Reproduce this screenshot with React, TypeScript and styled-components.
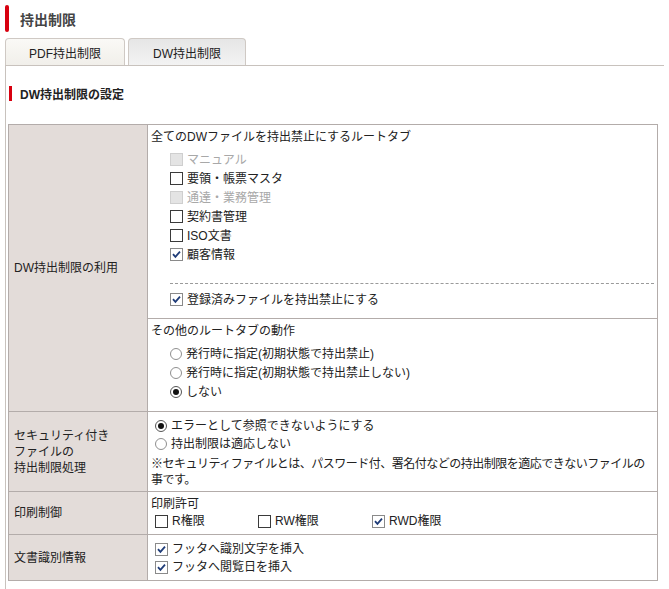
import React from 'react'
import styled, { createGlobalStyle } from 'styled-components'

const GlobalStyle = createGlobalStyle`
  body {
    margin: 0;
    background: #fff;
    font-family: "Liberation Sans", "Noto Sans CJK JP", sans-serif;
    font-size: 12px;
    color: #222;
  }
`

function App() {
  return (
    <>
      <GlobalStyle />
      <StyledPage>
        <TitleBar>持出制限</TitleBar>

        <Tabs>
          <Tab $width={120} $tone="beige">PDF持出制限</Tab>
          <Tab $width={118} $tone="gray">DW持出制限</Tab>
        </Tabs>

        <Panel>
          <SectionTitle>DW持出制限の設定</SectionTitle>

          <SettingsTable>
            <tbody>
              <tr>
                <LabelCell rowSpan={2}>DW持出制限の利用</LabelCell>
                <ValueCell $pad="4px 3px 9px">
                  <Heading>全てのDWファイルを持出禁止にするルートタブ</Heading>
                  <Indented>
                    <Check disabled>マニュアル</Check>
                    <Check>要領・帳票マスタ</Check>
                    <Check disabled>通達・業務管理</Check>
                    <Check>契約書管理</Check>
                    <Check>ISO文書</Check>
                    <Check checked>顧客情報</Check>
                    <Dashed />
                    <Check checked>登録済みファイルを持出禁止にする</Check>
                  </Indented>
                </ValueCell>
              </tr>
              <tr>
                <ValueCell $pad="4px 3px 10px">
                  <Heading>その他のルートタブの動作</Heading>
                  <Indented>
                    <Radio>発行時に指定(初期状態で持出禁止)</Radio>
                    <Radio>発行時に指定(初期状態で持出禁止しない)</Radio>
                    <Radio checked>しない</Radio>
                  </Indented>
                </ValueCell>
              </tr>
              <tr>
                <LabelCell>
                  セキュリティ付き
                  <br />
                  ファイルの
                  <br />
                  持出制限処理
                </LabelCell>
                <ValueCell $pad="5px 3px 3px">
                  <Radio checked dense>エラーとして参照できないようにする</Radio>
                  <Radio dense>持出制限は適応しない</Radio>
                  <Note>
                    ※セキュリティファイルとは、パスワード付、署名付などの持出制限を適応できないファイルの事です。
                  </Note>
                </ValueCell>
              </tr>
              <tr>
                <LabelCell>印刷制御</LabelCell>
                <ValueCell $pad="4px 3px 4px">
                  <Heading>印刷許可</Heading>
                  <PrintRow>
                    <Check dense>R権限</Check>
                    <Check dense>RW権限</Check>
                    <Check checked dense>RWD権限</Check>
                  </PrintRow>
                </ValueCell>
              </tr>
              <tr>
                <LabelCell>文書識別情報</LabelCell>
                <ValueCell $pad="5px 3px 4px">
                  <Check checked dense>フッタへ識別文字を挿入</Check>
                  <Check checked dense>フッタへ閲覧日を挿入</Check>
                </ValueCell>
              </tr>
            </tbody>
          </SettingsTable>
        </Panel>
      </StyledPage>
    </>
  )
}

export default App

type OptionProps = {
  checked?: boolean
  disabled?: boolean
  dense?: boolean
  children: React.ReactNode
}

function Check({ checked, disabled, dense, children }: OptionProps) {
  return (
    <Option $disabled={disabled} $dense={dense}>
      <Box $checked={checked} $disabled={disabled}>
        {checked && (
          <svg width="9" height="9" viewBox="0 0 9 9">
            <path d="M1 4.2 L3.4 6.8 L8 1.6" fill="none" stroke="#1f3c78" strokeWidth="1.8" />
          </svg>
        )}
      </Box>
      {children}
    </Option>
  )
}

function Radio({ checked, dense, children }: OptionProps) {
  return (
    <Option $dense={dense}>
      <Circle $checked={checked} />
      {children}
    </Option>
  )
}

const StyledPage = styled.div`
  padding: 5px 5px 0 5px;
  width: 659px;
`

const TitleBar = styled.h1`
  display: flex;
  align-items: center;
  gap: 11px;
  height: 27px;
  margin: 0;
  font-size: 14px;
  font-weight: bold;
  color: #444;

  &::before {
    content: '';
    width: 4px;
    height: 27px;
    border-radius: 2px;
    background: #d8000f;
  }
`

const Tabs = styled.div`
  display: flex;
  gap: 3px;
  margin-top: 6px;
`

const Tab = styled.div<{ $width: number; $tone: 'beige' | 'gray' }>`
  width: ${(p) => p.$width}px;
  height: 27px;
  display: flex;
  align-items: center;
  justify-content: center;
  box-sizing: border-box;
  border: 1px solid #cfc9c4;
  border-bottom: none;
  border-radius: 4px 4px 0 0;
  color: #222;
  background: ${(p) =>
    p.$tone === 'beige'
      ? 'linear-gradient(#faf9f6, #f1efea)'
      : 'linear-gradient(#e6e6e6, #f3f3f3)'};
`

const Panel = styled.div`
  border-top: 1px solid #c8c2bd;
  border-left: 1px solid #c8c2bd;
  padding: 20px 7px 8px 2px;
`

const SectionTitle = styled.h2`
  display: flex;
  align-items: center;
  gap: 8px;
  margin: 0 0 23px 1px;
  height: 15px;
  font-size: 12px;
  font-weight: bold;
  color: #222;

  &::before {
    content: '';
    width: 3px;
    height: 15px;
    background: #d8000f;
  }
`

const SettingsTable = styled.table`
  width: 650px;
  border-collapse: collapse;
  border: 1px solid #b3acaa;

  td {
    border: 1px solid #b3acaa;
  }
`

const LabelCell = styled.td`
  width: 133px;
  padding: 0 0 0 5px;
  background: #e3dcd9;
  line-height: 16px;
  vertical-align: middle;
`

const ValueCell = styled.td<{ $pad: string }>`
  padding: ${(p) => p.$pad};
  vertical-align: top;
  line-height: 16px;
`

const Heading = styled.div`
  line-height: 16px;
`

const Indented = styled.div`
  margin-top: 5px;
  padding-left: 15px;
`

const Option = styled.label<{ $disabled?: boolean; $dense?: boolean }>`
  display: flex;
  align-items: center;
  gap: 4px;
  height: ${(p) => (p.$dense ? 18 : 19)}px;
  padding-left: 4px;
  color: ${(p) => (p.$disabled ? '#a8a8a8' : '#222')};
`

const Box = styled.span<{ $checked?: boolean; $disabled?: boolean }>`
  width: 13px;
  height: 13px;
  box-sizing: border-box;
  display: flex;
  align-items: center;
  justify-content: center;
  border: 1px solid
    ${(p) => (p.$disabled ? '#cfcfcf' : p.$checked ? '#8a8a8a' : '#3a3a3a')};
  background: ${(p) => (p.$disabled ? '#e4e4e4' : '#fff')};
`

const Circle = styled.span<{ $checked?: boolean }>`
  width: 12px;
  height: 12px;
  box-sizing: border-box;
  border-radius: 50%;
  border: 1px solid ${(p) => (p.$checked ? '#555' : '#8f8f8f')};
  background: #fff;
  display: flex;
  align-items: center;
  justify-content: center;

  &::after {
    content: '';
    display: ${(p) => (p.$checked ? 'block' : 'none')};
    width: 6px;
    height: 6px;
    border-radius: 50%;
    background: #111;
  }
`

const Dashed = styled.div`
  margin: 19px 0 6px 4px;
  border-top: 1px dashed #9a9a9a;
`

const Note = styled.div`
  margin-top: 3px;
  letter-spacing: -0.5px;
`

const PrintRow = styled.div`
  display: grid;
  grid-template-columns: 103px 114px auto;
`
